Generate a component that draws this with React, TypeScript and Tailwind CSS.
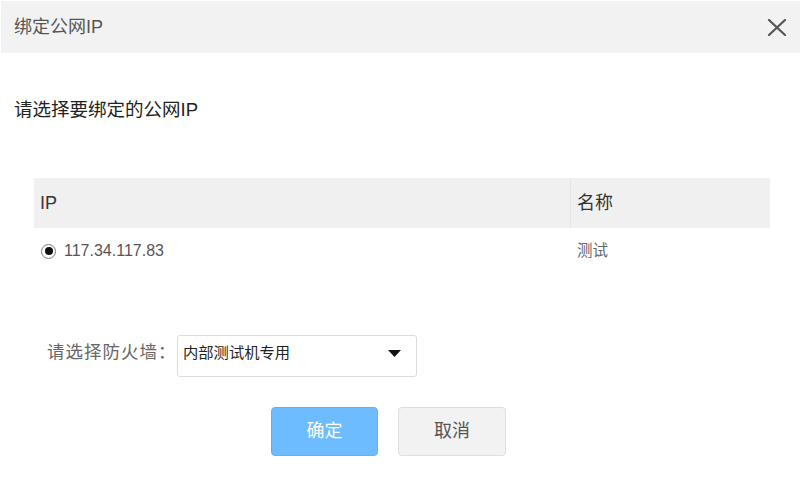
export default function App() {
  const font = { fontFamily: '"Liberation Sans", "Noto Sans CJK SC", sans-serif' };
  return (
    <div className="h-[486px] w-[800px] bg-white pl-px pt-px" style={font}>
      <div className="flex h-[52px] items-center justify-between bg-[#f2f2f2] pl-[13px] pr-[13px]">
        <span className="text-[18px] text-[#555]">绑定公网IP</span>
        <svg width="20" height="17" viewBox="0 0 20 17" className="text-[#555]">
          <path d="M2 1 L18 16 M18 1 L2 16" stroke="currentColor" strokeWidth="2.2" strokeLinecap="round" fill="none" />
        </svg>
      </div>

      <div className="px-[13px]">
        <p className="mt-[45px] text-[18.5px] leading-6 text-[#222]">请选择要绑定的公网IP</p>

        <div className="ml-[20px] mt-[56px] w-[736px]">
          <div className="flex h-[50px] items-center bg-[#f0f0f0] text-[18px] text-[#333]">
            <div className="flex h-full w-[537px] items-center border-r border-[#e4e4e4] pl-[6px]">IP</div>
            <div className="pl-[6px]">名称</div>
          </div>
          <div className="flex h-[46px] items-center text-[16px] text-[#555]">
            <div className="flex w-[538px] items-center gap-[8px] pl-[7px]">
              <span className="flex h-[15px] w-[15px] items-center justify-center rounded-full border border-[#777] bg-white">
                <span className="h-[8px] w-[8px] rounded-full bg-[#111]" />
              </span>
              <span>117.34.117.83</span>
            </div>
            <div className="pl-[5px] text-[15.5px] text-[#666]">测试</div>
          </div>
        </div>

        <div className="ml-[33px] mt-[61px] flex items-start">
          <span className="mt-[5px] w-[130px] shrink-0 whitespace-nowrap text-[17.5px] leading-6 tracking-[1px] text-[#666]">
            请选择防火墙：
          </span>
          <div className="flex h-[42px] w-[240px] items-start justify-between rounded-[3px] border border-[#ddd] bg-white pl-[5px] pr-[15px] pt-[7px]">
            <span className="text-[15.3px] leading-5 text-[#222]">内部测试机专用</span>
            <svg width="13" height="7" viewBox="0 0 13 7" className="mt-[7px]">
              <path d="M0 0 H13 L6.5 7 Z" fill="#111" />
            </svg>
          </div>
        </div>

        <div className="ml-[257px] mt-[30px] flex gap-[20px]">
          <button className="h-[49px] w-[107px] rounded-[4px] border border-[#5eb2fb] bg-[#6dbcff] text-[18px] text-white">
            确定
          </button>
          <button className="h-[49px] w-[108px] rounded-[4px] border border-[#dedede] bg-[#f2f2f2] text-[18px] text-[#555]">
            取消
          </button>
        </div>
      </div>
    </div>
  );
}
